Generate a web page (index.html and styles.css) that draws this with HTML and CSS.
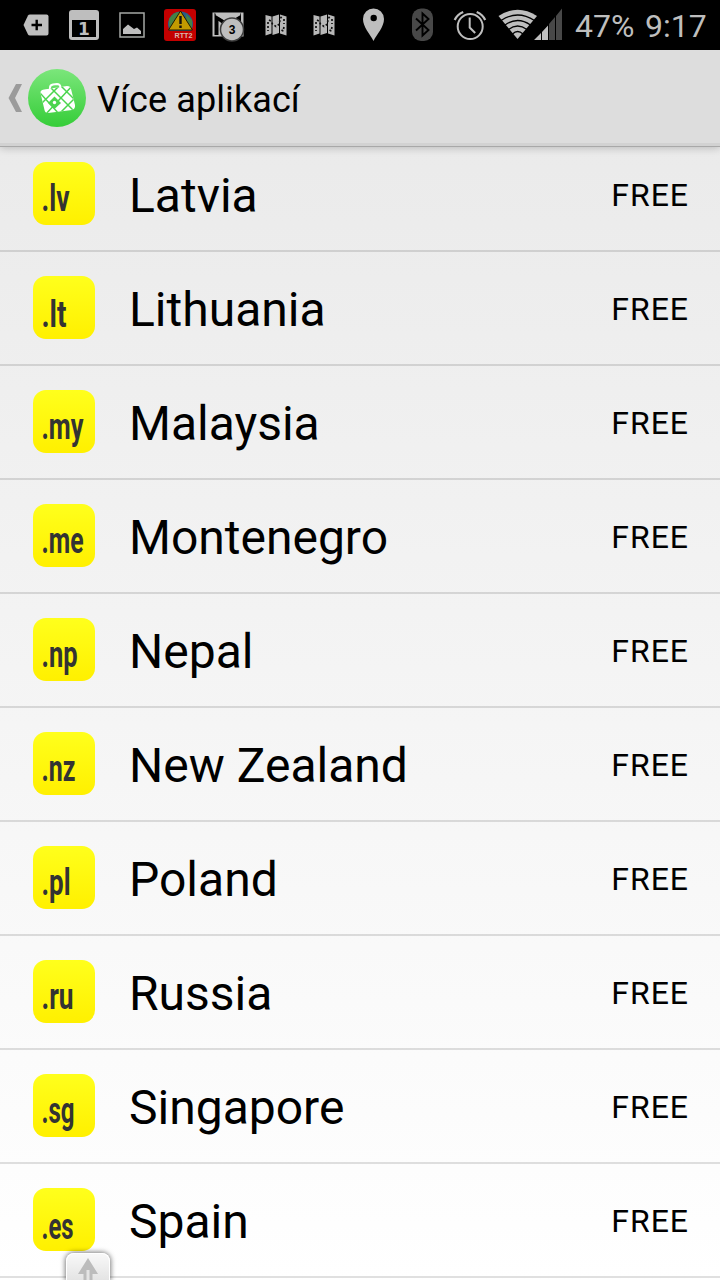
FILE: index.html
```html
<!DOCTYPE html>
<html lang="cs">
<head>
    <meta charset="UTF-8">
    <meta name="viewport" content="width=device-width, initial-scale=1.0">
    <title>Více aplikací</title>
    <link rel="stylesheet" href="styles.css">
</head>
<body>
    <div class="statusbar">
        <svg class="slot" viewBox="0 0 48 50">
            <path d="M11.500 25 L16 15.500 Q16.500 14.500 18 14.500 H34.500 Q36.500 14.500 36.500 16.500 V33.500 Q36.500 35.500 34.500 35.500 H18 Q16.500 35.500 16 34.500Z" fill="#bebebe"/>
            <path d="M19.500 25 H30 M24.700 19.700 V30.300" stroke="#000" stroke-width="2.400"/>
        </svg>
        <svg class="slot" viewBox="0 0 48 50">
            <rect x="9" y="10" width="30" height="30" rx="3" fill="#bebebe"/>
            <rect x="12" y="20" width="24" height="17" fill="#000"/>
            <text x="24" y="35" class="day">1</text>
        </svg>
        <svg class="slot" viewBox="0 0 48 50">
            <rect x="12" y="13" width="24" height="24" fill="none" stroke="#a5a8a5" stroke-width="1.500"/>
            <path d="M15 34 V29 L20 24.500 L26 29 L29 27.500 L33 31 V34Z" fill="#bebebe"/>
        </svg>
        <svg class="slot" viewBox="0 0 48 50">
            <rect x="8" y="9" width="32" height="32" rx="3" fill="#c40000"/>
            <circle cx="24.500" cy="24" r="12.500" fill="#275d87"/>
            <path d="M13 19 Q18 11 25 12 L22 20 L17 28 L13 26Z M30 14 L36 20 V28 L31 26Z" fill="#448345"/>
            <path d="M12 31 H37 V38 H12Z" fill="#c40000"/>
            <path d="M24.500 11 L36.500 30 H12.500Z" fill="#c29a00" stroke="#241a00" stroke-width="1"/>
            <path d="M24.500 16 V24 M24.500 25.500 V28" stroke="#15110a" stroke-width="2.400"/>
            <text x="27.500" y="38" class="rtt" textLength="18" lengthAdjust="spacingAndGlyphs">RTT2</text>
        </svg>
        <svg class="slot" viewBox="0 0 48 50">
            <rect x="8.500" y="12.500" width="31" height="24" fill="#bebebe"/>
            <path d="M12.500 35 V17 L23.500 25 L35 17 V35" fill="none" stroke="#000" stroke-width="4"/>
            <path d="M12 14 L24 21 L36 14" fill="none" stroke="#bebebe" stroke-width="2.500"/>
            <circle cx="28" cy="29.500" r="11.500" fill="#bebebe" stroke="#3c3c3c" stroke-width="1.500"/>
            <text x="28" y="34" class="count">3</text>
        </svg>
        <svg class="slot" viewBox="0 0 48 50">
            <path id="fold" d="M13.500 15 L19.500 16.500 V33.500 L13.500 35.500Z M20.500 16.500 L27 14.500 V33 L20.500 35Z M28 14.500 L34.500 16.500 V35.500 L28 33.500Z" fill="#b8b8b8"/>
            <path id="route" d="M17 20 L19 21 L20.500 24 L24 26.500 L27.500 24 L28 19 L30 16 M32 19 L32 24 M16 22 V31 M32 27 L31 31 M29.500 30 L33 32" fill="none" stroke="#111" stroke-width="1.700" stroke-dasharray="2 2"/>
        </svg>
        <svg class="slot" viewBox="0 0 48 50">
            <use href="#fold"/>
            <use href="#route"/>
        </svg>
        <svg class="slot" viewBox="0 0 48 50">
            <path d="M25.500 41 C22 34 15 27 15 19 A10.500 10.500 0 0 1 36 19 C36 27 29 34 25.500 41Z" fill="#bebebe"/>
            <circle cx="25.700" cy="18" r="3.200" fill="#000"/>
        </svg>
        <svg class="slot" viewBox="0 0 48 50">
            <rect x="16" y="8.500" width="21" height="32.500" rx="9" fill="#484848"/>
            <path d="M20 18.500 L32.500 30 L26.500 35.500 V13.500 L32.500 19 L20 30.500" fill="none" stroke="#000" stroke-width="1.900"/>
        </svg>
        <svg class="slot" viewBox="-1.700 0 48 50">
            <circle cx="24.500" cy="26.500" r="12.500" fill="none" stroke="#bebebe" stroke-width="2"/>
            <path d="M24 17.500 V27.500 L29.500 33" fill="none" stroke="#bebebe" stroke-width="2"/>
            <path d="M9 20 Q11.500 14.500 17.500 12 M31 12 Q37 14.500 39.500 20" fill="none" stroke="#bebebe" stroke-width="2.200"/>
        </svg>
        <svg class="signal" viewBox="492 0 72 50">
            <path d="M517.500 39 L498.500 16 Q517.500 3.500 537 16Z" fill="#bebebe"/>
            <path d="M501 20.500 Q517.500 9.500 534.500 20.500 M505 25 Q517.500 16 530.500 25 M508.500 29.500 Q517.500 22.500 527 29.500 M512.500 34 Q517.500 29 523 34" fill="none" stroke="#000" stroke-width="1.300"/>
            <path d="M534 40 L541 33 V40Z M542 32 L548 25.500 V40 H542Z" fill="#bebebe"/>
            <path d="M549 24 L555 17 V40 H549Z M556 16 L562 8.500 V40 H556Z" fill="#484848"/>
        </svg>
        <span class="battery">47%</span>
        <span class="clock">9:17</span>
    </div>

    <div class="actionbar">
        <svg class="back" viewBox="0 0 16 30">
            <path d="M9 1 H15 L8 15 L15 29 H9 L1.500 15Z" fill="#9b9b9b"/>
        </svg>
        <svg class="logo" viewBox="0 0 58 58">
            <defs>
                <linearGradient id="green" x1="0" y1="0" x2="0" y2="1">
                    <stop offset="0" stop-color="#7be67b"/>
                    <stop offset="1" stop-color="#35cd38"/>
                </linearGradient>
                <clipPath id="case">
                    <path d="M16 20.500 L39 17 Q42.500 17 43 20 L47 36 Q47.500 40 44 41 L20 44 Q17 44 16.500 41 L12.500 24 Q12 21 16 20.500Z"/>
                </clipPath>
            </defs>
            <circle cx="29" cy="29" r="29" fill="url(#green)"/>
            <path d="M22 20 V18.500 Q22 16 25 15.500 L29 15 Q32 15 32.500 18" fill="none" stroke="#fff" stroke-width="2"/>
            <g clip-path="url(#case)">
                <rect x="10" y="14" width="40" height="32" fill="#fff"/>
                <path d="M22 18 L47 43 M33 17 L49 33 M12 24 L32 46 M32 16 L12 36 M45 16 L17 46 M49 27 L31 45" stroke="#4bd54e" stroke-width="1.500"/>
                <path d="M26.500 27.500 L33 34 L26.500 40 L20 34Z" fill="#4bd54e"/>
            </g>
            <circle cx="26.500" cy="33.500" r="1.700" fill="#fff"/>
        </svg>
        <h1 class="title">Více aplikací</h1>
    </div>

    <div class="list">
        <div class="row">
            <svg class="tile" viewBox="0 0 62 63"><text x="8.500" y="48.500" textLength="28" lengthAdjust="spacingAndGlyphs">.lv</text></svg>
            <span class="name">Latvia</span>
            <span class="price">FREE</span>
        </div>
        <div class="row">
            <svg class="tile" viewBox="0 0 62 63"><text x="8.500" y="50.500" textLength="25" lengthAdjust="spacingAndGlyphs">.lt</text></svg>
            <span class="name">Lithuania</span>
            <span class="price">FREE</span>
        </div>
        <div class="row">
            <svg class="tile" viewBox="0 0 62 63"><text x="8.500" y="49" textLength="42" lengthAdjust="spacingAndGlyphs">.my</text></svg>
            <span class="name">Malaysia</span>
            <span class="price">FREE</span>
        </div>
        <div class="row">
            <svg class="tile" viewBox="0 0 62 63"><text x="8.500" y="49" textLength="42" lengthAdjust="spacingAndGlyphs">.me</text></svg>
            <span class="name">Montenegro</span>
            <span class="price">FREE</span>
        </div>
        <div class="row">
            <svg class="tile" viewBox="0 0 62 63"><text x="8.500" y="49" textLength="36" lengthAdjust="spacingAndGlyphs">.np</text></svg>
            <span class="name">Nepal</span>
            <span class="price">FREE</span>
        </div>
        <div class="row">
            <svg class="tile" viewBox="0 0 62 63"><text x="8.500" y="49" textLength="34" lengthAdjust="spacingAndGlyphs">.nz</text></svg>
            <span class="name">New Zealand</span>
            <span class="price">FREE</span>
        </div>
        <div class="row">
            <svg class="tile" viewBox="0 0 62 63"><text x="8.500" y="49" textLength="29" lengthAdjust="spacingAndGlyphs">.pl</text></svg>
            <span class="name">Poland</span>
            <span class="price">FREE</span>
        </div>
        <div class="row">
            <svg class="tile" viewBox="0 0 62 63"><text x="8.500" y="49" textLength="32" lengthAdjust="spacingAndGlyphs">.ru</text></svg>
            <span class="name">Russia</span>
            <span class="price">FREE</span>
        </div>
        <div class="row">
            <svg class="tile" viewBox="0 0 62 63"><text x="8.500" y="49" textLength="33" lengthAdjust="spacingAndGlyphs">.sg</text></svg>
            <span class="name">Singapore</span>
            <span class="price">FREE</span>
        </div>
        <div class="row">
            <svg class="tile" viewBox="0 0 62 63"><text x="8.500" y="51" textLength="32" lengthAdjust="spacingAndGlyphs">.es</text></svg>
            <span class="name">Spain</span>
            <span class="price">FREE</span>
        </div>
    </div>

    <div class="handle">
        <svg viewBox="0 0 20 22">
            <path d="M10 0 L20 16 H14.500 V22 H5.500 V16 H0Z" fill="#bcbcbc"/>
            <path d="M10 12 V22" stroke="#e4e4e4" stroke-width="3"/>
        </svg>
    </div>
</body>
</html>
```
FILE: styles.css
```css
body {
    position: relative;
    display: flex;
    flex-direction: column;
    height: 1280px;
    margin: 0;
    overflow: hidden;
    background: linear-gradient(#e8e8e8, #ffffff);
    font-family: Roboto, "Noto Sans", sans-serif;
    color: #000;
}
.statusbar {
    display: flex;
    align-items: center;
    flex: none;
    height: 50px;
    padding-left: 12px;
    background: #000;
    color: #bebebe;
    font-size: 32px;
    white-space: nowrap;
}
.slot {
    flex: none;
    width: 48px;
    height: 50px;
}
.signal {
    flex: none;
    width: 72px;
    height: 50px;
}
.day {
    font: bold 17px "DejaVu Sans", sans-serif;
    fill: #bebebe;
    text-anchor: middle;
}
.rtt {
    font: bold 8px "Liberation Sans", sans-serif;
    fill: #d8b8b0;
    text-anchor: middle;
}
.count {
    font: bold 12px "Liberation Sans", sans-serif;
    fill: #000;
    text-anchor: middle;
}
.battery {
    margin: 2px 0 0 11px;
    width: 70px;
}
.clock {
    margin-top: 2px;
    width: 64px;
}
.actionbar {
    display: flex;
    align-items: center;
    flex: none;
    box-sizing: border-box;
    height: 97px;
    padding-left: 7px;
    background: #dddddd;
    border-bottom: 1px solid #a8a8a8;
    box-shadow: inset 0 -3px 0 #d2d2d2, 0 1px 8px rgba(0, 0, 0, 0.22);
    z-index: 1;
}
.back {
    width: 16px;
    height: 30px;
}
.logo {
    width: 58px;
    height: 58px;
    margin-left: 5px;
}
.title {
    margin: 3px 0 0 11px;
    font-size: 36px;
    font-weight: normal;
    letter-spacing: 0.1px;
    white-space: nowrap;
}
.list {
    flex: 1;
    min-height: 0;
    margin-top: -9px;
    overflow: hidden;
}
.row {
    display: flex;
    align-items: center;
    box-sizing: border-box;
    height: 114px;
    padding: 0 31px 0 33px;
    border-bottom: 2px solid rgba(0, 0, 0, 0.12);
}
.tile {
    flex: none;
    width: 62px;
    height: 63px;
    margin-bottom: 2px;
    border-radius: 13px;
    background: linear-gradient(#ffff1c, #fff000);
    overflow: visible;
}
.tile text {
    font: bold 37px Roboto, sans-serif;
    fill: #333;
}
.name {
    flex: 1;
    margin: 2px 0 0 34px;
    font-size: 48px;
    white-space: nowrap;
}
.price {
    margin-top: 1px;
    font-size: 32px;
    letter-spacing: 1px;
}
.handle {
    position: absolute;
    left: 66px;
    top: 1253px;
    box-sizing: border-box;
    width: 44px;
    height: 27px;
    padding: 4px 0 0 11px;
    border: 1px solid #fff;
    border-bottom: none;
    border-radius: 8px 8px 0 0;
    background: linear-gradient(#f8f8f8, #e4e4e4);
    box-shadow: 0 0 5px 1px rgba(0, 0, 0, 0.5);
    z-index: 2;
}
.handle svg {
    display: block;
    width: 20px;
    height: 22px;
}
```
